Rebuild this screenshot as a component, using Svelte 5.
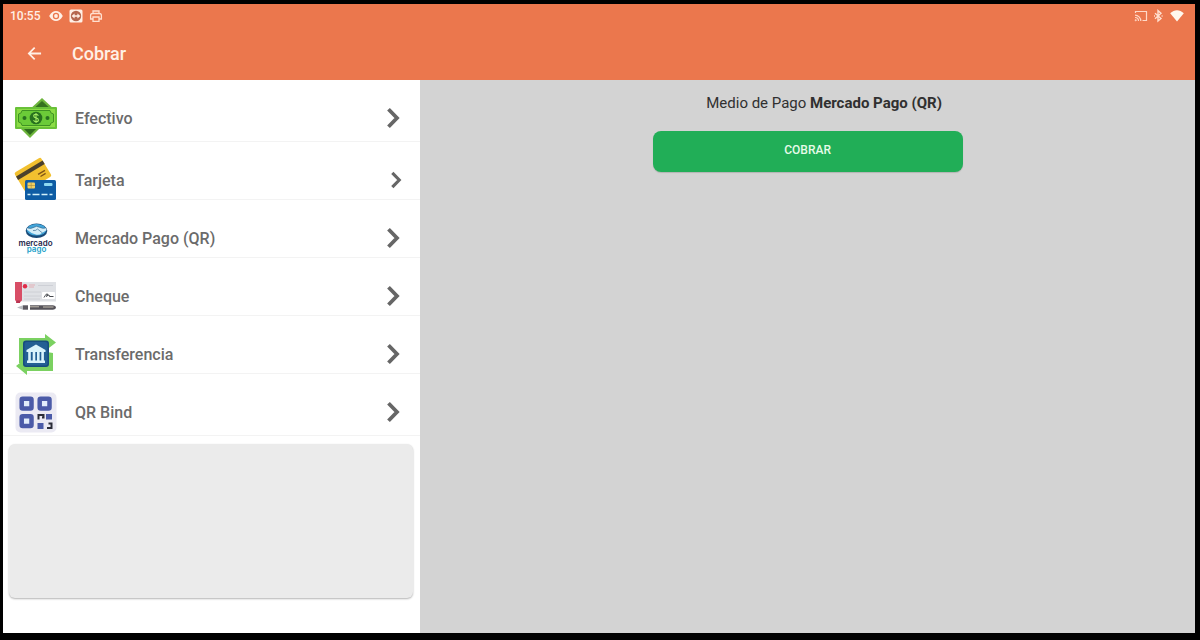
<script>
  const methods = [
    { id: 'efectivo', label: 'Efectivo' },
    { id: 'tarjeta', label: 'Tarjeta' },
    { id: 'mercadopago', label: 'Mercado Pago (QR)' },
    { id: 'cheque', label: 'Cheque' },
    { id: 'transferencia', label: 'Transferencia' },
    { id: 'qrbind', label: 'QR Bind' },
  ]

  let selected = $state('mercadopago')
  let current = $derived(methods.find((m) => m.id === selected))
</script>

<div class="screen">
  <header class="top">
    <div class="status-bar">
      <span class="clock">10:55</span>
      <svg viewBox="0 0 14 12">
        <path d="M0.2 6C2 2.600 4.300 1 7 1S12 2.600 13.800 6C12 9.400 9.700 11 7 11S2 9.400 0.200 6z" fill="#fff0e6" />
        <circle cx="7" cy="6" r="3.2" fill="#eb774d" />
        <circle cx="7" cy="6" r="1.9" fill="#fff0e6" />
      </svg>
      <svg viewBox="0 0 14 14">
        <rect x="0.5" y="0.5" width="13" height="13" rx="1.5" fill="#fff0e6" />
        <circle cx="7" cy="7" r="5.2" fill="#b5674f" />
        <path d="M2.600 7l3-2.500v1.700h2.800V4.500l3 2.500-3 2.500V7.800H5.600v1.700z" fill="#fff0e6" />
      </svg>
      <svg viewBox="0 0 14 14" fill="none" stroke="#ffe0d0" stroke-width="1.3">
        <path d="M4 4.500V2h6v2.500M4 10H1.600V6.500q0-2 2-2h6.800q2 0 2 2V10H10" />
        <path d="M4 8h6v4.300H4z" />
      </svg>
      <div class="status-right">
        <svg viewBox="0 0 14 14" fill="none" stroke="#ffd9c8" stroke-width="1.2">
          <path d="M1.500 4V2.500h11v9H8.500" />
          <path d="M1 6.200a5.800 5.800 0 0 1 5.800 5.800M1 8.500a3.500 3.500 0 0 1 3.500 3.500" />
          <circle cx="1.700" cy="11.300" r="0.400" />
        </svg>
        <svg viewBox="0 0 14 14" fill="none" stroke="#ffe0d0" stroke-width="1.4">
          <path d="M3 4.200l6 5.400-3 2.500v-10.500l3 2.600L3 9.800" />
          <path d="M2 7h1M9.600 7h1" />
        </svg>
        <svg viewBox="0 0 14 14">
          <path d="M0.200 4.300C4.500 0.300 9.500 0.300 13.800 4.300L7 12.500z" fill="#fff8ee" />
        </svg>
      </div>
    </div>
    <div class="toolbar">
      <button class="back-btn" aria-label="Volver">
        <svg viewBox="0 0 16 16" fill="none" stroke="#fff0e6" stroke-width="1.9">
          <path d="M15 8H2M8.200 1.700L2 8l6.200 6.300" />
        </svg>
      </button>
      <h1>Cobrar</h1>
    </div>
  </header>

  <div class="content">
    <aside class="sidebar">
      <nav class="methods">
        {#each methods as method}
          <button class="method" onclick={() => (selected = method.id)}>
            <svg class="method-icon" viewBox="0 0 44 40" aria-hidden="true">
              {#if method.id === 'efectivo'}
                <path d="M28 0l14 13-14 12-14-12z" fill="#6db53c" />
                <path d="M28 3l11 10H17z" fill="#34711f" />
                <path d="M16 40L3 27l13-12 13 12z" fill="#6db53c" />
                <path d="M16 37L6 27h20z" fill="#2f6b1d" />
                <rect x="1" y="9" width="42" height="22" rx="1" fill="#69c138" />
                <rect x="3" y="11" width="38" height="18" fill="#8bdc45" />
                <path d="M8 12.500h28q0 3 3.500 3.500v8q-3.500 0.500-3.500 3.500H8q0-3-3.500-3.500v-8q3.500-0.500 3.500-3.500z" fill="#6bcb38" stroke="#3f9223" stroke-width="1" />
                <circle cx="22" cy="20" r="6.300" fill="#28711f" />
                <circle cx="10.500" cy="20" r="2" fill="#28711f" />
                <circle cx="33.500" cy="20" r="2" fill="#28711f" />
                <path d="M24.300 17.800q-0.600-1.600-2.300-1.600-2.300 0-2.300 1.800 0 1.500 2.300 1.900 2.400 0.400 2.400 2.100 0 1.800-2.400 1.800-1.900 0-2.400-1.700M22 15v10" fill="none" stroke="#a6ed63" stroke-width="1.100" />
              {:else if method.id === 'tarjeta'}
                <g transform="rotate(-31 18 14)">
                  <rect x="3" y="4" width="31" height="22" rx="2" fill="#f2c02f" />
                  <rect x="3" y="8" width="31" height="4" fill="#4a402c" />
                  <path d="M23 17.500h8M24 20.500h6" stroke="#805316" stroke-width="1.400" />
                </g>
                <rect x="11" y="20" width="31" height="20" rx="1.500" fill="#0e5ca4" />
                <rect x="13.500" y="22.500" width="7.500" height="6" rx="1" fill="#efce61" />
                <path d="M13.500 25.500h7.500M17.200 22.500v6" stroke="#a58b3e" stroke-width="0.600" />
                <rect x="30" y="23" width="8.500" height="3" rx="1" fill="#8ed9f2" />
                <path d="M13.500 34.500h3M18.500 34.500h7M27.500 34.500h6M35.500 34.500h3" stroke="#d1f0f9" stroke-width="1.400" />
              {:else if method.id === 'mercadopago'}
                <ellipse cx="22.500" cy="12.800" rx="10.800" ry="7.300" fill="#194a78" />
                <ellipse cx="22.500" cy="11.800" rx="9.800" ry="5.800" fill="#42a5d9" />
                <path d="M13 9.800q4 1.500 7-0.500l2.500-1 3 1q3.500 1.800 6.500 0.500l0.500 2.500-5 3q-2.500 2.500-6.500 1-4-1-8-4.500z" fill="#d5eef8" />
                <path d="M13 9.800q4 1.500 7-0.500l2.500-1 3 1q3.500 1.800 6.500 0.500M19 12.500q3 0.500 4.500-1.500l5 4" fill="none" stroke="#24557f" stroke-width="0.600" />
                <text class="mp-text">
                  <tspan x="22.500" y="27.500" fill="#25264b">mercado</tspan>
                  <tspan x="22.500" y="34" fill="#18a0c9">pago</tspan>
                </text>
              {:else if method.id === 'cheque'}
                <rect x="5" y="6" width="37" height="19.500" fill="#dfe1e5" />
                <path d="M1 6h7v18.500L6 26H2.500L1 24z" fill="#d84e66" />
                <path d="M2.500 24.500h4L6 27H2z" fill="#b93552" />
                <circle cx="11" cy="10.200" r="2.200" fill="#e02c49" />
                <path d="M15 9h6M15 11h5" stroke="#e4afb5" stroke-width="1" />
                <path d="M10 16h17M10 20h17M10 23h16M24 9.500h15" stroke="#c9ccd2" stroke-width="0.800" />
                <rect x="28" y="16" width="13" height="7" rx="1" fill="#fff" />
                <path d="M30 21.500q3-5 3.500-3.500l-1 2.500q2-2 2.500-1.500l0.500 1.500h4" fill="none" stroke="#31343a" stroke-width="0.900" />
                <path d="M3 31.500l6-2.200v4.400z" fill="#b7babf" />
                <rect x="9" y="29.300" width="5" height="4.400" fill="#5c5961" />
                <path d="M16 29.300h23q3 0.400 3 2.200t-3 2.200H16z" fill="#555259" />
                <path d="M29 31h10.500M16 30.800h9" stroke="#c4bdb0" stroke-width="1" />
              {:else if method.id === 'transferencia'}
                <path d="M5 4h26V0l11 8.500L31 17v-4H11v16H5z" fill="#7bd161" />
                <path d="M39 37H13v4L2 32l11-8.500V28h20V18l6 1z" fill="#7bd161" />
                <rect x="9" y="6.500" width="26" height="26.500" rx="3" fill="#174d7e" />
                <rect x="10.500" y="8" width="23" height="23.500" rx="2" fill="#235f94" />
                <path d="M22 10.500l9.500 5.500v2h-19v-2z" fill="#d9f3fc" />
                <path d="M15.500 18v9M20 18v9M24.300 18v9M28.600 18v9" stroke="#d9f3fc" stroke-width="2.600" />
                <path d="M13 26.500h18v2.500H13z" fill="#d9f3fc" />
              {:else}
                <rect x="1.500" y="0.500" width="41" height="40" rx="5" fill="#ebeaf3" />
                <g fill="#e2edfb" stroke="#4b5ba8" stroke-width="4.500">
                  <rect x="7.700" y="6.700" width="9.800" height="9.800" rx="1" />
                  <rect x="25.700" y="6.700" width="9.800" height="9.800" rx="1" />
                  <rect x="7.700" y="24.200" width="9.800" height="9.800" rx="1" />
                </g>
                <path d="M32 22h6v5.500h-6zM23.500 31h6v6h-6z" fill="#4b5ba8" />
                <path d="M24.500 27.500V23h5v2.500h-1.500M33 36h4.500v-4.500h-3" fill="none" stroke="#2b2d38" stroke-width="2" />
              {/if}
            </svg>
            <span class="method-label">{method.label}</span>
            <svg class="chevron" class:small={method.id === 'tarjeta'} viewBox="0 0 14 22" aria-hidden="true">
              <path d="M2.500 2.200L11 11l-8.500 8.800" fill="none" stroke="#666" stroke-width="3.800" />
            </svg>
          </button>
        {/each}
      </nav>
      <div class="summary"></div>
    </aside>

    <main class="detail">
      <p class="detail-title">Medio de Pago <strong>{current.label}</strong></p>
      <button class="charge-btn">COBRAR</button>
    </main>
  </div>
</div>

<style>
  :global(body) {
    background: #000;
  }

  .screen {
    min-height: 100vh;
    box-sizing: border-box;
    padding: 4px 5px 7px 3px;
    background: #000;
    display: flex;
    flex-direction: column;
    font-family: Roboto, sans-serif;
  }

  button {
    font-family: inherit;
    border: none;
    cursor: pointer;
  }

  .top {
    background: #eb774d;
    color: #fff0e6;
  }

  .status-bar {
    display: flex;
    align-items: center;
    gap: 6px;
    height: 23px;
    padding: 0 11px 0 7px;
  }

  .status-bar svg {
    width: 14px;
    height: 14px;
  }

  .clock {
    font-size: 12px;
    font-weight: 500;
    margin-right: 3px;
  }

  .status-right {
    display: flex;
    align-items: center;
    gap: 4px;
    margin-left: auto;
  }

  .toolbar {
    display: flex;
    align-items: center;
    height: 53px;
    padding: 0 24px;
    gap: 30px;
  }

  .back-btn {
    display: flex;
    padding: 0;
    background: none;
  }

  .back-btn svg {
    width: 15px;
    height: 15px;
  }

  h1 {
    margin: 0;
    font-size: 18px;
    line-height: 24px;
    font-weight: 500;
  }

  .content {
    flex: 1;
    display: flex;
  }

  .sidebar {
    width: 35%;
    display: flex;
    flex-direction: column;
    background: #fff;
  }

  .methods {
    display: flex;
    flex-direction: column;
  }

  .method {
    display: flex;
    align-items: center;
    width: 100%;
    padding: 18px 20px 0 11px;
    background: none;
    box-shadow: inset 0 -1px #f3f3f3;
    text-align: left;
  }

  .method:first-child,
  .method:last-child {
    padding-bottom: 4px;
  }

  .method-icon {
    width: 44px;
    height: 40px;
    margin-right: 17px;
    overflow: visible;
  }

  .mp-text {
    font-family: Inter, sans-serif;
    font-size: 8px;
    font-weight: 600;
    text-anchor: middle;
  }

  .method-label {
    flex: 1;
    font-size: 16px;
    font-weight: 500;
    color: #6b6b6b;
  }

  .chevron {
    width: 14px;
    height: 22px;
  }

  .chevron.small {
    width: 12px;
    height: 18px;
    margin-right: -2px;
  }

  .summary {
    flex: 1;
    min-height: 100px;
    margin: 8px 7px 35px 6px;
    border-radius: 6px;
    background: #ebebeb;
    box-shadow: 0 1px 2px rgba(0, 0, 0, 0.3);
  }

  .detail {
    flex: 1;
    display: flex;
    flex-direction: column;
    align-items: center;
    padding-top: 13px;
    background: #d3d3d3;
  }

  .detail-title {
    margin: 0 0 18px;
    padding-left: 33px;
    font-size: 15px;
    line-height: 20px;
    color: #303030;
  }

  .charge-btn {
    width: 40%;
    height: 41px;
    padding: 0 0 3px;
    border-radius: 8px;
    background: #21ae57;
    color: #e6fbe9;
    font-size: 12px;
    font-weight: 500;
    box-shadow: 0 1px 1px rgba(0, 0, 0, 0.15);
  }
</style>
